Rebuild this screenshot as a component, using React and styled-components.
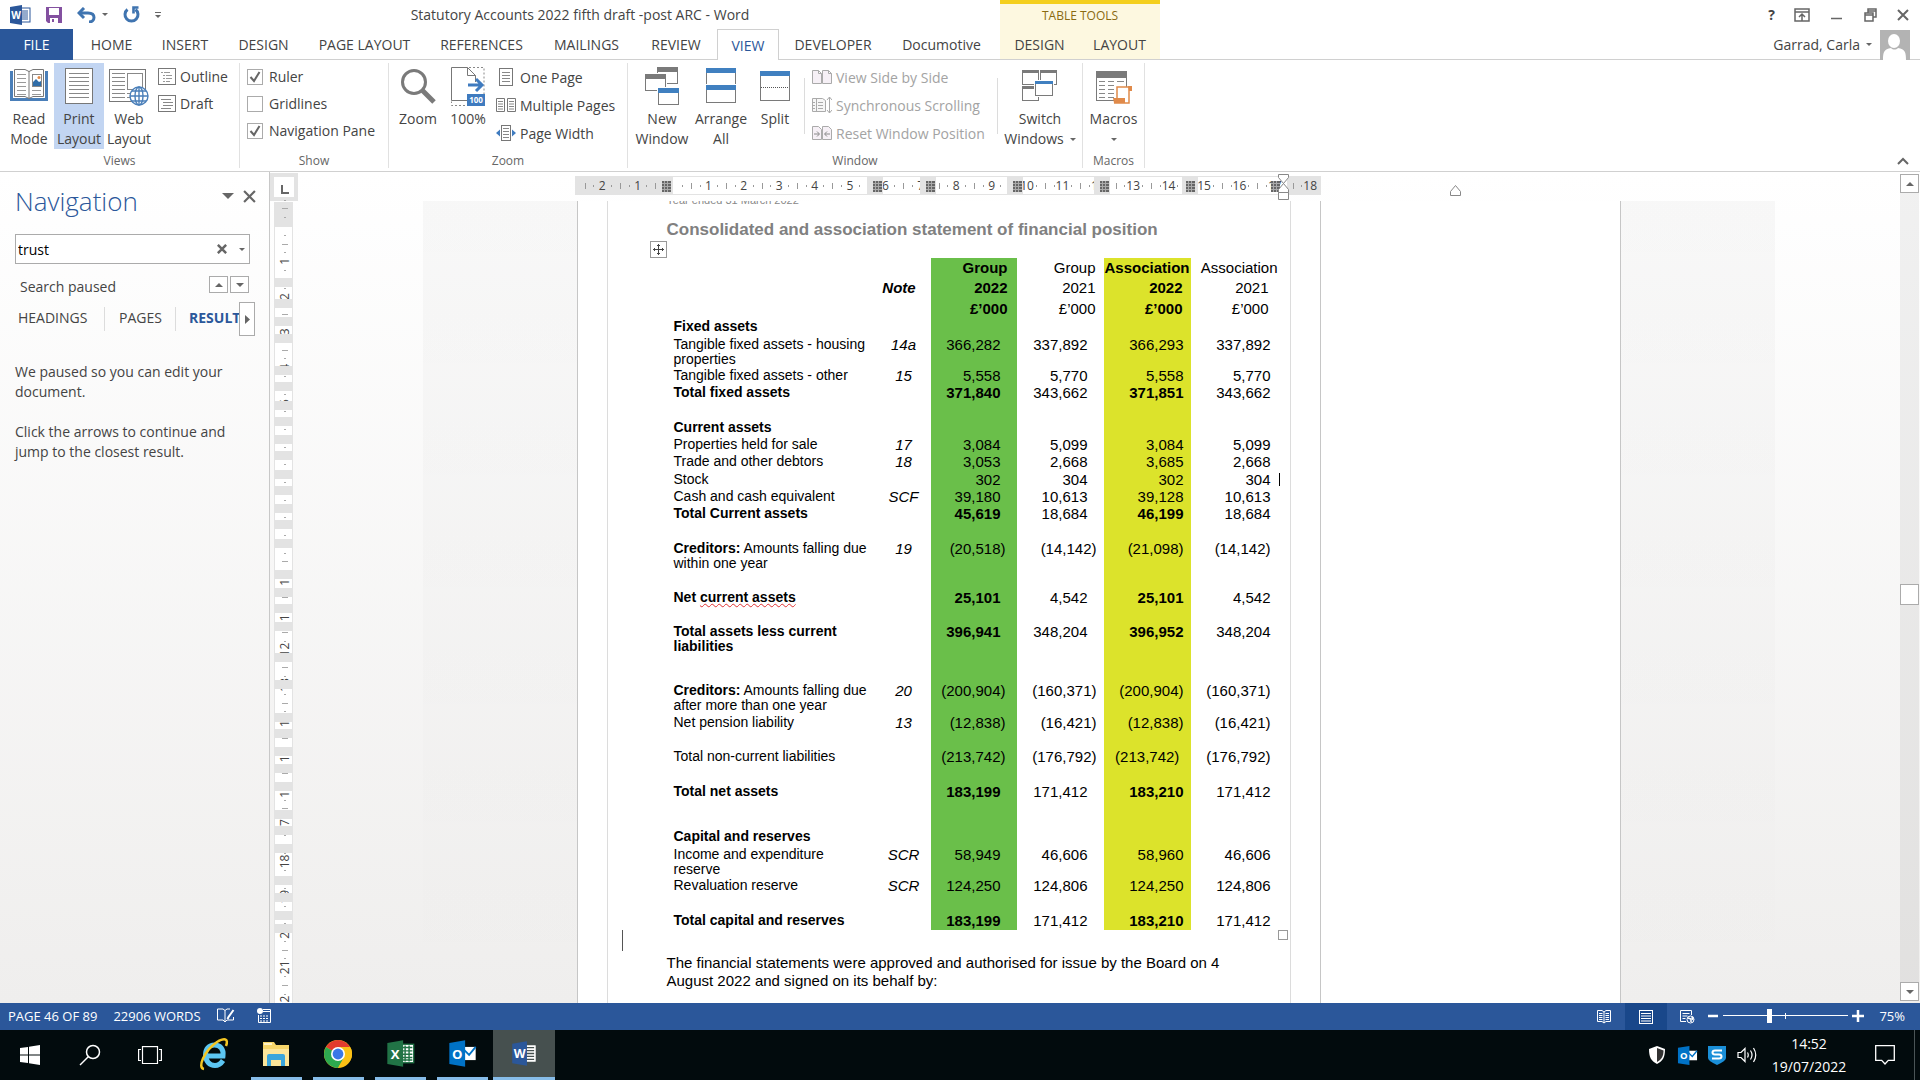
import React from "react";
import styled, { createGlobalStyle, css } from "styled-components";

const GlobalStyle = createGlobalStyle`
  * {
    box-sizing: border-box;
  }

  html, body, #root {
    height: 100%;
  }

  body {
    margin: 0;
    overflow: hidden;
    font-family: "Open Sans", "Noto Sans", sans-serif;
    font-size: 14px;
    color: #444;
  }

  button, input {
    font: inherit;
    color: inherit;
    border: none;
    background: none;
    padding: 0;
    margin: 0;
  }

  svg {
    display: block;
    flex: none;
  }
`;

const Window = styled.div`
  display: flex;
  flex-direction: column;
  height: 100vh;
  background: #fff;
`;

/* ---------- title bar and tabs ---------- */

const Header = styled.header`
  display: flex;
  height: 60px;
  flex: none;
  border-bottom: 1px solid #d0d0d0;
`;

const HeaderMain = styled.div`
  width: 1000px;
  flex: none;
`;

const TitleRow = styled.div`
  display: flex;
  align-items: center;
  height: 29px;
`;

const QuickAccess = styled.div`
  display: flex;
  align-items: center;
  gap: 15px;
  width: 160px;
  padding-left: 9px;
`;

const IconButton = styled.button`
  display: flex;
  align-items: center;
  justify-content: center;
  gap: 6px;
`;

const DocTitle = styled.div`
  flex: 1;
  text-align: center;
`;

const TabRow = styled.nav`
  display: flex;
  height: 31px;
`;

const Tab = styled.button`
  width: ${(props) => props.$width}px;
  height: 31px;
  white-space: nowrap;
  ${(props) =>
    props.$file &&
    css`
      background: #2a579a;
      color: #fff;
      margin-right: 3px;
    `}
  ${(props) =>
    props.$active &&
    css`
      background: #fff;
      color: #2b579a;
      border: 1px solid #d0d0d0;
      border-bottom: none;
    `}
`;

const ContextTabs = styled.div`
  width: 160px;
  flex: none;
  background: #fdf8e0;
  border-top: 4px solid #f4cf1d;
`;

const ContextLabel = styled.div`
  height: 25px;
  line-height: 24px;
  font-size: 12px;
  text-align: center;
  color: #8a6a10;
`;

const HeaderEnd = styled.div`
  flex: 1;
`;

const WindowControls = styled.div`
  display: flex;
  align-items: center;
  justify-content: flex-end;
  gap: 19px;
  height: 29px;
  padding-right: 11px;
`;

const Account = styled.div`
  display: flex;
  align-items: center;
  justify-content: flex-end;
  gap: 8px;
  height: 31px;
  padding-right: 10px;
`;

/* ---------- ribbon ---------- */

const Ribbon = styled.section`
  display: flex;
  position: relative;
  height: 112px;
  flex: none;
  border-bottom: 1px solid #d0d0d0;
`;

const Group = styled.div`
  display: flex;
  flex-direction: column;
  width: ${(props) => props.$width}px;
  margin: 3px 0;
  border-right: 1px solid #e1e1e1;
`;

const GroupBody = styled.div`
  display: flex;
  height: 86px;
  padding-left: ${(props) => props.$left || 0}px;
`;

const GroupLabel = styled.div`
  height: 18px;
  line-height: 24px;
  font-size: 12px;
  text-align: center;
  color: #666;
`;

const BigButton = styled.button`
  display: flex;
  flex-direction: column;
  align-items: center;
  width: ${(props) => props.$width || 50}px;
  height: 86px;
  padding-top: 4px;
  line-height: 20px;
  white-space: pre-line;
  background: ${(props) => (props.$active ? "#c2d5f2" : "none")};
`;

const IconSlot = styled.span`
  height: 42px;
`;

const ButtonLine = styled.span`
  display: flex;
  align-items: center;
  gap: 6px;
  height: 20px;
`;

const SmallColumn = styled.div`
  display: flex;
  flex-direction: column;
  min-width: ${(props) => props.$width || 0}px;
  padding: 0 ${(props) => props.$pad || 5}px;
`;

const SmallButton = styled.button`
  display: flex;
  align-items: center;
  gap: 4px;
  height: ${(props) => props.$height || 28}px;
  white-space: nowrap;

  &:disabled {
    color: #a3a3a3;
  }
`;

const CheckLabel = styled.label`
  display: flex;
  align-items: center;
  gap: 6px;
  height: 27px;
`;

const CheckBox = styled.span`
  display: grid;

  > * {
    grid-area: 1 / 1;
  }

  input {
    appearance: none;
    width: 16px;
    height: 16px;
    border: 1px solid #ababab;
    background: #fff;
  }

  svg {
    z-index: 1;
    pointer-events: none;
  }
`;

const Divider = styled.div`
  width: 1px;
  height: 56px;
  flex: none;
  margin: 15px 0 0 ${(props) => props.$left || 0}px;
  background: #dcdcdc;
`;

const CollapseButton = styled.button`
  position: absolute;
  right: 11px;
  bottom: 6px;
`;

/* ---------- navigation pane ---------- */

const Body = styled.div`
  display: flex;
  flex: 1;
  min-height: 0;
  background: linear-gradient(#fff, #efeeed);
`;

const NavPane = styled.aside`
  width: 270px;
  flex: none;
  padding: 0 13px 0 15px;
  border-right: 1px solid #c8c8c8;
`;

const NavHeader = styled.div`
  display: flex;
  align-items: center;
  gap: 9px;
  height: 48px;
  margin-bottom: 14px;
`;

const NavTitle = styled.h2`
  flex: 1;
  margin: 10px 0 0;
  font-size: 26px;
  font-weight: 300;
  color: #2b579a;
`;

const SearchBox = styled.div`
  display: flex;
  align-items: center;
  gap: 12px;
  width: 235px;
  height: 30px;
  padding: 0 4px 0 2px;
  border: 1px solid #ababab;
  background: #fff;

  input {
    flex: 1;
    min-width: 0;
    color: #000;
    outline: none;
  }
`;

const SearchStatus = styled.div`
  display: flex;
  align-items: center;
  gap: 2px;
  width: 234px;
  height: 38px;
  padding: 3px 0 0 5px;

  span {
    flex: 1;
    padding-top: 3px;
  }
`;

const BoxButton = styled.button`
  display: flex;
  align-items: center;
  justify-content: center;
  width: ${(props) => props.$width || 19}px;
  height: ${(props) => props.$height || 17}px;
  flex: none;
  border: 1px solid #ababab;
  background: #fff;
`;

const NavTabs = styled.div`
  display: flex;
  align-items: center;
  height: 34px;
  margin-bottom: 26px;
`;

const NavTab = styled.button`
  width: ${(props) => props.$width}px;
  height: 24px;
  flex: none;
  overflow: hidden;
  text-align: left;
  padding: 0 0 4px ${(props) => props.$left}px;
  font-weight: ${(props) => (props.$active ? 700 : 400)};
  color: ${(props) => (props.$active ? "#2b579a" : "inherit")};
  border-right: ${(props) => (props.$active ? "none" : "1px solid #dcdcdc")};
`;

const NavText = styled.p`
  margin: 0 0 20px;
  line-height: 20px;
`;

/* ---------- document ---------- */

const RulerColumn = styled.div`
  width: 28px;
  flex: none;
  overflow: hidden;
`;

const DocArea = styled.main`
  display: flex;
  flex-direction: column;
  align-items: center;
  flex: 1;
  min-width: 0;
`;

const Backdrop = styled.div`
  display: flex;
  justify-content: center;
  flex: 1;
  width: 1352px;
  min-height: 0;
  overflow: hidden;
  background: linear-gradient(rgba(0, 0, 0, 0.028), rgba(0, 0, 0, 0));
`;

const Sheet = styled.div`
  display: flex;
  width: 1044px;
  background: #fff;
  border: solid #c6c6c6;
  border-width: 0 1px;
`;

const Page = styled.article`
  width: 743px;
  padding: 0 29px;
  border-right: 1px solid #c6c6c6;
`;

const TextArea = styled.div`
  height: 100%;
  padding-left: 59px;
  border: solid #dcdcdc;
  border-width: 0 1px;
  font-family: "Liberation Sans", Arial, sans-serif;
  font-size: 15px;
  color: #000;
`;

const RunningHead = styled.div`
  display: flex;
  align-items: flex-end;
  height: 5px;
  overflow: hidden;
  font-size: 11px;
  line-height: 12px;
  color: #888;
`;

const DocHeading = styled.h1`
  margin: 14px 0 1px;
  font-size: 17px;
  line-height: 20px;
  color: #808080;
`;

const MoveHandle = styled.button`
  display: flex;
  align-items: center;
  justify-content: center;
  width: 17px;
  height: 17px;
  margin-left: -17px;
  border: 1px solid #999;
  background: #fff;
`;

const Statement = styled.table`
  width: 615px;
  table-layout: fixed;
  border-collapse: collapse;

  th, td {
    padding: 0;
    vertical-align: top;
    font-weight: 400;
  }
`;

const Row = styled.tr`
  height: ${(props) => props.$height}px;
`;

const LabelCell = styled.th`
  && {
    padding: 1px 0 0 7px;
    font-size: 14px;
    line-height: 15px;
    text-align: left;
    white-space: pre-line;
    font-weight: ${(props) => (props.$bold ? 700 : 400)};
  }
`;

const NoteCell = styled.td`
  && {
    padding-top: 1px;
    line-height: 16px;
    font-style: italic;
    text-align: center;
  }
`;

const NoteHead = styled.th`
  && {
    padding-right: 9px;
    line-height: 19px;
    font-weight: 700;
    font-style: italic;
    text-align: center;
  }
`;

const fills = { group: "#6abf4a", association: "#dce32b" };

const AmountCell = styled.td`
  && {
    position: relative;
    padding: 1px ${(props) => props.$right}px 0 0;
    line-height: 16px;
    text-align: right;
    white-space: pre;
    font-weight: ${(props) => (props.$bold ? 700 : 400)};
    background: ${(props) => fills[props.$fill] || "none"};
  }
`;

const AmountHead = styled(AmountCell).attrs({ as: "th" })`
  && {
    padding-top: 0;
    line-height: 19px;
  }
`;

const TextCaret = styled.i`
  position: absolute;
  right: 2px;
  top: 2px;
  width: 1px;
  height: 13px;
  background: #000;
`;

const Squiggle = styled.span`
  text-decoration: underline wavy #e03030 1px;
  text-underline-offset: 1px;
`;

const TableFoot = styled.div`
  display: flex;
  justify-content: space-between;
  align-items: flex-start;
  width: 666px;
  height: 24px;
  margin-left: -45px;
`;

const InsertionBar = styled.i`
  width: 1px;
  height: 21px;
  background: #555;
`;

const ResizeHandle = styled.i`
  width: 10px;
  height: 10px;
  border: 1px solid #999;
`;

const Paragraph = styled.p`
  width: 570px;
  margin: 0;
  line-height: 18px;
`;

const Scrollbar = styled.div`
  display: flex;
  flex-direction: column;
  align-items: flex-end;
  width: 21px;
  flex: none;
  padding: 2px 1px 2px 0;
`;

const ScrollTrack = styled.div`
  flex: 1;
  width: 19px;
  background: rgba(0, 0, 0, 0.055);
  padding-top: 391px;
`;

/* ---------- status bar ---------- */

const StatusBar = styled.footer`
  display: flex;
  align-items: center;
  height: 27px;
  flex: none;
  padding: 0 15px 2px 8px;
  background: #2b579a;
  color: #fff;
  font-size: 13px;
`;

const StatusItem = styled.button`
  display: flex;
  align-items: center;
  margin-right: ${(props) => props.$gap || 16}px;
`;

const Spacer = styled.div`
  flex: 1;
`;

const ViewButton = styled.button`
  display: flex;
  align-items: center;
  justify-content: center;
  align-self: flex-start;
  width: ${(props) => props.$width || 42}px;
  height: 27px;
  background: ${(props) => (props.$active ? "#19478a" : "none")};
`;

const ZoomSlider = styled.input`
  appearance: none;
  width: 125px;
  height: 16px;
  margin: 0 4px;
  background: linear-gradient(#fff, #fff) 50% 50% / 1px 6px no-repeat,
    linear-gradient(#fff, #fff) 0 50% / 100% 1px no-repeat;

  &::-webkit-slider-thumb {
    appearance: none;
    width: 5px;
    height: 14px;
    background: #fff;
  }
`;

const ZoomValue = styled.button`
  width: 41px;
  text-align: right;
`;

/* ---------- taskbar ---------- */

const Taskbar = styled.footer`
  display: flex;
  height: 50px;
  flex: none;
  background: #020b0d;
  color: #fff;
`;

const TaskButton = styled.button`
  display: flex;
  align-items: center;
  justify-content: center;
  width: 60px;
  height: 50px;
`;

const Apps = styled.div`
  display: flex;
  padding-left: 3px;
`;

const AppButton = styled.button`
  display: grid;
  grid-template-rows: 47px 3px;
  align-items: center;
  justify-items: center;
  width: 62px;
  height: 50px;
  background: ${(props) => (props.$active ? "#46504f" : "none")};

  &::after {
    content: "";
    width: ${(props) => (props.$active ? 62 : 51)}px;
    height: 3px;
    background: ${(props) => (props.$running ? "#86bce8" : "none")};
  }
`;

const TrayButton = styled.button`
  display: flex;
  align-items: center;
  justify-content: center;
  width: ${(props) => props.$width || 30}px;
`;

const Clock = styled.button`
  width: 94px;
  line-height: 23px;
  text-align: center;
`;

const ShowDesktop = styled.button`
  width: 6px;
  border-left: 1px solid #4a5456;
`;

/* ---------- icons ---------- */

const Arrow = ({ dir = "down", size = 6, color = "#666" }) => {
  const h = Math.ceil(size / 2);
  const shapes = {
    down: `0,0 ${size},0 ${size / 2},${h}`,
    up: `0,${h} ${size},${h} ${size / 2},0`,
    right: `0,0 ${h},${size / 2} 0,${size}`,
  };
  const side = dir === "right";
  return (
    <svg width={side ? h : size} height={side ? size : h}>
      <polygon points={shapes[dir]} fill={color} />
    </svg>
  );
};

const Cross = ({ size = 12, weight = 2, color = "#666" }) => (
  <svg width={size} height={size} viewBox="0 0 12 12">
    <path d="M1 1L11 11M11 1L1 11" stroke={color} strokeWidth={weight} />
  </svg>
);

const OfficeLogo = ({ letter, color, size = 22, kind = "doc" }) => (
  <svg width={size} height={size} viewBox="0 0 22 22">
    {kind === "doc" && (
      <g>
        <rect x="11" y="4" width="10" height="14" fill="#fff" stroke={color} />
        <path d="M12 7h7M12 9h7M12 11h7M12 13h7M12 15h7" stroke={color} />
      </g>
    )}
    {kind === "bars" && (
      <path d="M12 5h8M12 7.4h8M12 9.8h8M12 12.2h8M12 14.6h8M12 17h8M19.5 4.5v13" stroke="#fff" strokeWidth="1.3" />
    )}
    {kind === "grid" && (
      <g>
        <rect x="11" y="4" width="10" height="14" fill="#fff" stroke={color} />
        <path d="M12 6.5h8M12 9h8M12 11.5h8M12 14h8M12 16h8M14.5 5v12M17.5 5v12" stroke={color} strokeWidth="1.1" />
      </g>
    )}
    {kind === "mail" && (
      <g>
        <rect x="12" y="6" width="9" height="10" fill="#fff" />
        <path d="M12 8l4 4 5-6" fill="none" stroke={color} strokeWidth="1.4" />
      </g>
    )}
    <polygon points="1,3 13,1 13,21 1,19" fill={color} />
    <text x="7" y="15" textAnchor="middle" fontSize="10" fontWeight="700" fill="#fff">
      {letter}
    </text>
  </svg>
);

const SaveIcon = () => (
  <svg width="16" height="16" viewBox="0 0 16 16">
    <path d="M0 0h16v16H2l-2-2z" fill="#8350a0" />
    <path d="M3 1h10v7H3zM4 11h8v5H4z" fill="#fff" />
    <rect x="6" y="12" width="2" height="3" fill="#8350a0" />
  </svg>
);

const UndoIcon = () => (
  <svg width="19" height="16" viewBox="0 0 19 16" fill="none" stroke="#3f74b0">
    <path d="M2 6h9c4 0 6 2 6 4.5S15 15 12 15" strokeWidth="3" />
    <path d="M7 1L2 6l5 5" strokeWidth="3" />
  </svg>
);

const RedoIcon = () => (
  <svg width="17" height="17" viewBox="0 0 17 17" fill="none" stroke="#3f74b0">
    <path d="M4.5 3.500A6.500 6.500 0 1 0 12.5 3.500" strokeWidth="3" />
    <path d="M15.500 1.500h-5v6" strokeWidth="2.600" />
  </svg>
);

const lines = (x1, x2, from, count, step) =>
  Array.from({ length: count }, (_, i) => `M${x1} ${from + i * step}H${x2}`).join("");

const ReadIcon = () => (
  <svg width="38" height="37" viewBox="0 0 38 37" fill="none">
    <path d="M1.500 4v28.500h35V4" stroke="#4a7fb9" strokeWidth="3" />
    <path d="M4.500 2.500h10.500l4 2 4-2h10.500v27H23l-4 2-4-2H4.500z" fill="#fff" stroke="#777" />
    <path d="M19 4v28" stroke="#777" />
    <path d={lines(7, 16, 7.5, 6, 4) + lines(22, 31, 23.5, 2, 4)} stroke="#999" />
    <rect x="22.500" y="7.500" width="9" height="12" stroke="#888" fill="#fff" />
    <path d="M23 19v-4l3-3 3 3 2-1v5z" fill="#2f6da8" />
    <circle cx="29" cy="10.500" r="1.500" fill="#e08a4a" />
  </svg>
);

const PrintIcon = () => (
  <svg width="28" height="37" viewBox="0 0 28 37" fill="none">
    <rect x="0.500" y="1.500" width="27" height="35" fill="#fff" stroke="#777" />
    <path d={lines(4, 24, 6.5, 7, 4)} stroke="#888" />
  </svg>
);

const WebIcon = () => (
  <svg width="40" height="39" viewBox="0 0 40 39" fill="none">
    <rect x="0.500" y="2.500" width="36" height="32" fill="#fff" stroke="#777" />
    <path d={lines(3, 16, 6.5, 7, 4) + lines(18, 22, 26.5, 2, 4)} stroke="#888" />
    <rect x="18.500" y="6.500" width="15" height="16" stroke="#888" />
    <g stroke="#4a7fb9" strokeWidth="1.400">
      <circle cx="30" cy="29" r="9" fill="#fff" />
      <ellipse cx="30" cy="29" rx="4" ry="9" />
      <path d="M21 29h18M23 24h14M23 34h14M30 20v18" />
    </g>
  </svg>
);

const OutlineIcon = () => (
  <svg width="18" height="17" viewBox="0 0 18 17" fill="none" stroke="#777">
    <rect x="0.500" y="0.500" width="17" height="16" fill="#fff" />
    <path d="M3 4.500h2M6 4.500h6M5 7.500h2M8 7.500h6M5 10.500h2M8 10.500h6M5 13.500h2M8 13.500h4" stroke="#999" />
  </svg>
);

const DraftIcon = () => (
  <svg width="18" height="17" viewBox="0 0 18 17" fill="none" stroke="#777">
    <rect x="0.500" y="0.500" width="17" height="16" fill="#fff" />
    <path d="M3 4.500h10M5 7.500h10M5 10.500h10M3 13.500h10" stroke="#888" />
  </svg>
);

const CheckIcon = () => (
  <svg width="16" height="16" viewBox="0 0 16 16">
    <path d="M3.500 8l3.500 4 5.500-9" fill="none" stroke="#666" strokeWidth="2" />
  </svg>
);

const ZoomIcon = () => (
  <svg width="36" height="38" viewBox="0 0 36 38" fill="none" stroke="#7a7a7a">
    <circle cx="14" cy="15" r="11.500" strokeWidth="3" />
    <path d="M22 23l12 12" strokeWidth="5" />
  </svg>
);

const HundredIcon = () => (
  <svg width="34" height="40" viewBox="0 0 34 40" fill="none">
    <path d="M18 .5h15v38H.5v-4" stroke="#888" strokeDasharray="2 2" />
    <path d="M.5 33.500V.5h16l8 8v25z" fill="#fff" />
    <path d="M24.500 15V8.500l-8-8H.5v33H16M16.500 .5v8h8" stroke="#777" />
    <path d="M17 18h13M25 12l6 6-6 6" stroke="#3f7bbf" strokeWidth="3" />
    <rect x="16" y="27" width="18" height="12" fill="#3f7bbf" />
    <text x="25" y="36" textAnchor="middle" fontSize="8" fontWeight="700" fill="#fff">
      100
    </text>
  </svg>
);

const OnePageIcon = () => (
  <svg width="20" height="18" viewBox="0 0 20 18" fill="none" stroke="#777">
    <rect x="3.500" y="0.500" width="13" height="17" fill="#fff" />
    <path d={lines(6, 14, 4.5, 4, 3)} stroke="#888" />
  </svg>
);

const MultiPageIcon = () => (
  <svg width="20" height="16" viewBox="0 0 20 16" fill="none" stroke="#777">
    <path d="M.5 1.500h8v13h-8zM11.500 1.500h8v13h-8z" fill="#fff" />
    <path d={lines(2, 7, 4.5, 4, 2.5) + lines(13, 18, 4.5, 4, 2.5)} stroke="#888" />
  </svg>
);

const PageWidthIcon = () => (
  <svg width="20" height="16" viewBox="0 0 20 16" fill="none" stroke="#777">
    <rect x="5.500" y="0.500" width="9" height="15" fill="#fff" />
    <path d={lines(7, 13, 3.5, 4, 3)} stroke="#888" />
    <path d="M4 4.500v7L0 8zM16 4.500v7L20 8z" fill="#3f7bbf" stroke="none" />
  </svg>
);

const Pane = ({ x, y, w, h, bar = "#7a7a7a", cap = 5 }) => (
  <g>
    <rect x={x - 1} y={y - 1} width={w + 2} height={h + 2} fill="#fff" />
    <rect x={x + 0.5} y={y + 0.5} width={w - 1} height={h - 1} fill="#fff" stroke="#7a7a7a" />
    <rect x={x} y={y} width={w} height={cap} fill={bar} />
  </g>
);

const NewWindowIcon = () => (
  <svg width="34" height="38" viewBox="0 0 34 38">
    <Pane x={12} y={0} w={21} h={17} />
    <Pane x={0} y={7} w={21} h={17} />
    <Pane x={13} y={21} w={21} h={17} bar="#4080c0" />
  </svg>
);

const ArrangeIcon = () => (
  <svg width="30" height="36" viewBox="0 0 30 36">
    <Pane x={0} y={1} w={30} h={18} bar="#4080c0" />
    <Pane x={0} y={18} w={30} h={18} bar="#4080c0" />
  </svg>
);

const SplitIcon = () => (
  <svg width="30" height="34" viewBox="0 0 30 34">
    <Pane x={0} y={4} w={30} h={30} bar="#4080c0" />
    <path d="M1 20.500h28" stroke="#555" strokeDasharray="1 1" />
  </svg>
);

const SideIcon = () => (
  <svg width="20" height="16" viewBox="0 0 20 16" fill="#f6f0f6" stroke="#aaa">
    <path d="M.5 1.500h6l3 3v10h-9zM10.500 1.500h6l3 3v10h-9zM6.500 1.500v3h3M16.500 1.500v3h3" />
  </svg>
);

const SyncIcon = () => (
  <svg width="20" height="18" viewBox="0 0 20 18" fill="none" stroke="#aaa">
    <path d="M.5 2.500h10l3 2v11H.5zM4.500 2.500v13" fill="#f6f6f6" />
    <path d={lines(6, 11, 6.5, 3, 3) + lines(1, 3, 6.5, 3, 3)} />
    <path d="M17.500 1v16M15 4l2.500-3L20 4M15 14l2.500 3 2.500-3" />
  </svg>
);

const ResetIcon = () => (
  <svg width="20" height="16" viewBox="0 0 20 16" fill="#f6f0f6" stroke="#aaa">
    <path d="M.5 1.500h6l3 3v10h-9zM10.500 1.500h6l3 3v10h-9z" />
    <path d="M2 9h5M5 6.500L7.500 9 5 11.500M18 9h-5M15 6.500L12.500 9l2.500 2.500" fill="none" stroke="#888" />
  </svg>
);

const SwitchIcon = () => (
  <svg width="36" height="34" viewBox="0 0 36 34">
    <Pane x={0} y={3} w={17} h={15} cap={3} />
    <Pane x={18} y={3} w={17} h={15} cap={3} />
    <Pane x={0} y={19} w={17} h={15} cap={3} />
    <Pane x={13} y={14} w={18} h={15} cap={3} bar="#4080c0" />
  </svg>
);

const MacrosIcon = () => (
  <svg width="36" height="37" viewBox="0 0 36 37" fill="none">
    <rect x="0.500" y="4.500" width="30" height="29" fill="#fff" stroke="#7a7a7a" />
    <rect y="4" width="31" height="7" fill="#7a7a7a" />
    <path d={lines(3, 9, 14.5, 5, 4) + lines(12, 18, 14.5, 5, 4) + lines(21, 28, 14.5, 1, 4)} stroke="#888" />
    <path d="M21 32V20h12v16H18" fill="#fff" stroke="#e08a4a" strokeWidth="1.500" />
    <path d="M17 31h12v5H18zM32 19h4v5h-3z" fill="#e08a4a" />
  </svg>
);

const WindowGlyph = ({ d, size = 16 }) => (
  <svg width={size} height="14" viewBox={`0 0 ${size} 14`}>
    <path d={d} fill="none" stroke="#666" strokeWidth="1.500" />
  </svg>
);

const Avatar = () => (
  <svg width="30" height="30" viewBox="0 0 30 30">
    <rect width="30" height="30" fill="#b3b3b3" />
    <ellipse cx="14" cy="11" rx="6" ry="7" fill="#fff" />
    <path d="M3 30c0-8 1-11 8-12 2 2 5 2 7 0 7 1 8 4 8 12z" fill="#fff" />
  </svg>
);

const StatusBook = () => (
  <svg width="18" height="15" viewBox="0 0 18 15" fill="none" stroke="#fff">
    <path d="M8 2.500L6 1H.5v11H6l2 2 2-2h6.500V9M8 2.500V14M8 2.500L10 1h3" />
    <path d="M16.500 2l-5 7-1 2" strokeWidth="2" />
  </svg>
);

const MacroRecord = () => (
  <svg width="14" height="15" viewBox="0 0 14 15" fill="none" stroke="#fff">
    <path d="M1.500 7v7.500h12v-13H6M6 3.500h7" />
    <path d="M3 8h9M3 10.500h9M3 13h9" strokeDasharray="2 1" />
    <circle cx="3" cy="3" r="3" fill="#fff" stroke="none" />
  </svg>
);

const StatusRead = () => (
  <svg width="14" height="14" viewBox="0 0 14 14" fill="none" stroke="#fff">
    <path d="M7 2L5 .5H.5v11H5L7 13l2-1.500h4.500V.5H9L7 2v11" />
    <path d={lines(2, 5.5, 3.5, 4, 2) + lines(8.5, 12, 3.5, 4, 2)} />
  </svg>
);

const StatusPrint = () => (
  <svg width="14" height="14" viewBox="0 0 14 14" fill="none" stroke="#fff">
    <rect x="0.500" y="0.500" width="13" height="13" />
    <path d={lines(2, 12, 3.5, 4, 2.5)} />
  </svg>
);

const StatusWeb = () => (
  <svg width="15" height="14" viewBox="0 0 15 14" fill="none" stroke="#fff">
    <path d="M6 11.500H.5V.5h11V5" />
    <path d="M2.500 3.500h7M2.500 6h5M2.500 8.500h3" />
    <circle cx="10.500" cy="9.500" r="3.500" />
    <path d="M8 8l3 1v3M12 7l1 3" strokeWidth="1.500" />
  </svg>
);

const Sign = ({ plus }) => (
  <svg width="12" height="12" viewBox="0 0 12 12">
    <path d={plus ? "M0 6h12M6 0v12" : "M1 6h10"} stroke="#fff" strokeWidth="2.500" />
  </svg>
);

const StartIcon = () => (
  <svg width="20" height="20" viewBox="0 0 20 20" fill="#fff">
    <path d="M0 3l8-1v7.500H0zM9 1.800L20 0v9.500H9zM0 10.500h8V18l-8-1zM9 10.500h11V20L9 18.200z" />
  </svg>
);

const SearchIcon = () => (
  <svg width="22" height="22" viewBox="0 0 22 22" fill="none" stroke="#fff" strokeWidth="1.500">
    <circle cx="14" cy="8" r="6.500" />
    <path d="M9.500 12.500L1 21" />
  </svg>
);

const TaskViewIcon = () => (
  <svg width="24" height="18" viewBox="0 0 24 18" fill="none" stroke="#fff" strokeWidth="1.200">
    <rect x="4.500" y="0.600" width="15" height="17" />
    <path d="M3 3.500H.6v11H3M21 3.500h2.400v11H21" />
  </svg>
);

const ExplorerLogo = () => (
  <svg width="30" height="34" viewBox="0 0 30 34" fill="none">
    <path d="M6 19h18c1-7-3-11-8.500-11S6.500 12 6.500 18s4 10.500 9.500 10.500c4 0 6-2 8-5" stroke="#5cc6f2" strokeWidth="5" />
    <path d="M5 32C-2 31 5 14 18 5c7-4 12-4 9 4" stroke="#f3c623" strokeWidth="2.500" />
  </svg>
);

const FolderLogo = () => (
  <svg width="28" height="26" viewBox="0 0 28 26">
    <path d="M1 1h11l2 3h13v20H1z" fill="#f5d56a" />
    <path d="M1 8h26v17H1z" fill="#fbe59a" />
    <path d="M5 25V15q0-2 2-2h14q2 0 2 2v10h-4v-6h-10v6z" fill="#3aa5dc" />
    <rect x="2" y="2" width="8" height="2" fill="#fff3c4" />
  </svg>
);

const ChromeLogo = () => (
  <svg width="28" height="28" viewBox="0 0 28 28">
    <circle cx="14" cy="14" r="14" fill="#fbc116" />
    <path d="M14 14L1.900 7A14 14 0 0 1 26.100 7z" fill="#e33b2e" />
    <path d="M14 14L1.900 7A14 14 0 0 0 14 28l6-10.500z" fill="#2da94f" />
    <path d="M14 7h12.100a14 14 0 0 1 0 14L14 28l6-10.500z" fill="#fbc116" />
    <circle cx="14" cy="14" r="7" fill="#fff" />
    <circle cx="14" cy="14" r="5.400" fill="#3b78e7" />
  </svg>
);

const ShieldIcon = () => (
  <svg width="18" height="18" viewBox="0 0 18 18">
    <path d="M9 0l8 3c0 8-2 12-8 15C3 15 1 11 1 3z" fill="#fff" />
    <path d="M9 2l6.500 2.500c0 6-2 9-6.500 11.500z" fill="#333" />
  </svg>
);

const SophosIcon = () => (
  <svg width="18" height="19" viewBox="0 0 18 19">
    <path d="M0 0h18v12q0 3-9 7Q0 15 0 12z" fill="#1a8fd8" />
    <path d="M14 4.500H7q-2.500 0-2.500 2T7 8.500h4q2.500 0 2.500 2t-2.500 2H4" fill="none" stroke="#fff" strokeWidth="2" />
  </svg>
);

const VolumeIcon = () => (
  <svg width="20" height="18" viewBox="0 0 20 18" fill="none" stroke="#fff" strokeWidth="1.200">
    <path d="M1 6.500h3l4-4v13l-4-4H1z" />
    <path d="M10.500 6.500q1.500 2.500 0 5M13.500 4.500q3 4.500 0 9M16.500 2q4.500 7 0 14" />
  </svg>
);

const NoticeIcon = () => (
  <svg width="20" height="20" viewBox="0 0 20 20" fill="none" stroke="#fff" strokeWidth="1.300">
    <path d="M.7 .7h18.600v14.600h-6L10 19l-3.300-3.700h-6z" />
  </svg>
);

/* ---------- rulers ---------- */

const CM = 35.4;

// x is measured from the left edge of the ruler
const columnMarks = [87, 298, 351, 438, 525, 611, 696];
const columnBands = [292, 345, 432, 519, 607];

const HorizontalRuler = () => {
  const origin = 98;
  const numbers = Array.from({ length: 21 }, (_, i) => i - 2).filter((n) => n && n < 19);
  const ticks = Array.from({ length: 83 }, (_, i) => i - 10).filter((q) => q % 4 && q < 72);
  return (
    <svg width="1048" height="29" viewBox="0 0 1048 29">
      <rect x="0" y="4" width="746" height="19" fill="#e3e3e3" />
      <rect x="98" y="4" width="614" height="19" fill="#fff" />
      <path d="M98 4.500h614M98 22.500h614" stroke="#e3e3e3" />
      {ticks.map((q) => (
        <path
          key={q}
          d={`M${Math.round(origin + (q * CM) / 4) + 0.5} ${q % 2 ? "13v2" : "11v6"}`}
          stroke="#999"
        />
      ))}
      {numbers.map((n) => (
        <text key={n} x={origin + n * CM} y="18" textAnchor="middle" fontSize="12" fill="#444">
          {Math.abs(n)}
        </text>
      ))}
      {columnBands.map((x) => (
        <rect key={x} x={x} y="4" width="16" height="19" fill="#e3e3e3" />
      ))}
      {columnMarks.map((x) => (
        <g key={x}>
          <rect x={x} y="9" width="9" height="11" fill="#666" />
          <path d={`M${x} 11.500h9M${x} 14.500h9M${x} 17.500h9M${x + 2.5} 9v11M${x + 5.5} 9v11`} stroke="#aaa" />
        </g>
      ))}
      <path
        d="M703.500 2.500h10v3l-5 6-5-6zM703.500 20.500v-3l5-6 5 6v3zM703.500 20.500h10v7h-10z"
        fill="#fff"
        stroke="#888"
      />
      <path d="M875.500 23.500v-4l5-6 5 6v4z" fill="#fff" stroke="#888" />
    </svg>
  );
};

const rowBands = [
  106, 127, 145, 162, 194, 210, 229, 245, 263, 279, 298, 314, 332, 348, 367, 398, 416, 432, 450, 481,
  508, 541, 557, 575, 592, 610, 638, 654, 672, 704, 721, 739, 752,
];

const VerticalRuler = () => {
  const origin = 54;
  const step = 35.3;
  const numbers = Array.from({ length: 22 }, (_, i) => i + 1);
  const ticks = Array.from({ length: 93 }, (_, i) => i - 3).filter((q) => q % 4);
  return (
    <svg width="28" height="831" viewBox="0 0 28 831">
      <rect x="0" y="1" width="28" height="28" fill="#e3e3e3" />
      <rect x="4" y="5" width="20" height="20" fill="#fff" />
      <path d="M12 13v8h7" fill="none" stroke="#666" strokeWidth="2" />
      <rect x="4" y="30" width="19" height="801" fill="#e3e3e3" />
      <rect x="5" y="55" width="17" height="776" fill="#fff" />
      {ticks.map((q) => (
        <path
          key={q}
          d={`M${q % 2 ? "14" : "12"} ${Math.round(origin + (q * step) / 4) + 0.5}h${q % 2 ? 2 : 6}`}
          stroke="#aaa"
        />
      ))}
      {numbers.map((n) => (
        <text
          key={n}
          transform={`translate(19 ${origin + n * step}) rotate(-90)`}
          textAnchor="middle"
          fontSize="12"
          fill="#444"
        >
          {n}
        </text>
      ))}
      {rowBands.map((y) => (
        <rect key={y} x="4" y={y} width="19" height="9" fill="#e3e3e3" />
      ))}
    </svg>
  );
};

/* ---------- data ---------- */

const tabs = [
  { name: "FILE", width: 73, file: true },
  { name: "HOME", width: 71 },
  { name: "INSERT", width: 76 },
  { name: "DESIGN", width: 81 },
  { name: "PAGE LAYOUT", width: 121 },
  { name: "REFERENCES", width: 113 },
  { name: "MAILINGS", width: 97 },
  { name: "REVIEW", width: 82 },
  { name: "VIEW", width: 62, active: true },
  { name: "DEVELOPER", width: 108 },
  { name: "Documotive", width: 109 },
];

const columns = [
  { fill: "group", bold: true, right: 16, paren: 11, head: 9, name: "Group", nameRight: 9, year: "2022" },
  { right: 16, paren: 7, head: 8, name: "Group", nameRight: 8, year: "2021" },
  { fill: "association", bold: true, right: 7, paren: 7, head: 8, name: "Association", nameRight: 1, year: "2022" },
  { right: 11, paren: 11, head: 13, name: "Association", nameRight: 4, year: "2021" },
];

const rows = [
  { label: "Fixed assets", bold: true, height: 18 },
  { label: "Tangible fixed assets - housing\nproperties", note: "14a", values: ["366,282", "337,892", "366,293", "337,892"], height: 31 },
  { label: "Tangible fixed assets - other", note: "15", values: ["5,558", "5,770", "5,558", "5,770"], height: 17 },
  { label: "Total fixed assets", bold: true, values: ["371,840", "343,662", "371,851", "343,662"], height: 35 },
  { label: "Current assets", bold: true, height: 17 },
  { label: "Properties held for sale", note: "17", values: ["3,084", "5,099", "3,084", "5,099"], height: 17 },
  { label: "Trade and other debtors", note: "18", values: ["3,053", "2,668", "3,685", "2,668"], height: 18 },
  { label: "Stock", values: ["302", "304", "302", "304"], caret: true, height: 17 },
  { label: "Cash and cash equivalent", note: "SCF", values: ["39,180", "10,613", "39,128", "10,613"], height: 17 },
  { label: "Total Current assets", bold: true, values: ["45,619", "18,684", "46,199", "18,684"], height: 35 },
  { lead: "Creditors:", label: " Amounts falling due\nwithin one year", note: "19", values: ["(20,518)", "(14,142)", "(21,098)", "(14,142)"], height: 49 },
  { lead: "Net ", misspelt: "current assets", bold: true, values: ["25,101", "4,542", "25,101", "4,542"], height: 34 },
  { label: "Total assets less current\nliabilities", bold: true, values: ["396,941", "348,204", "396,952", "348,204"], height: 59 },
  { lead: "Creditors:", label: " Amounts falling due\nafter more than one year", note: "20", values: ["(200,904)", "(160,371)", "(200,904)", "(160,371)"], height: 32 },
  { label: "Net pension liability", note: "13", values: ["(12,838)", "(16,421)", "(12,838)", "(16,421)"], height: 34 },
  { label: "Total non-current liabilities", values: ["(213,742)", "(176,792)", "(213,742) ", "(176,792)"], height: 35 },
  { label: "Total net assets", bold: true, values: ["183,199", "171,412", "183,210", "171,412"], height: 45 },
  { label: "Capital and reserves", bold: true, height: 18 },
  { label: "Income and expenditure\nreserve", note: "SCR", values: ["58,949", "46,606", "58,960", "46,606"], height: 31 },
  { label: "Revaluation reserve", note: "SCR", values: ["124,250", "124,806", "124,250", "124,806"], height: 35 },
  { label: "Total capital and reserves", bold: true, values: ["183,199", "171,412", "183,210", "171,412"], height: 18 },
];

/* ---------- sections ---------- */

const TopBar = () => (
  <Header>
    <HeaderMain>
      <TitleRow>
        <QuickAccess>
          <OfficeLogo letter="W" color="#2b579a" />
          <IconButton aria-label="Save">
            <SaveIcon />
          </IconButton>
          <IconButton aria-label="Undo">
            <UndoIcon />
            <Arrow />
          </IconButton>
          <IconButton aria-label="Repeat">
            <RedoIcon />
          </IconButton>
          <IconButton aria-label="Customize toolbar">
            <svg width="6" height="6">
              <path d="M0 .5h6" stroke="#666" />
              <path d="M0 3h6l-3 3z" fill="#666" />
            </svg>
          </IconButton>
        </QuickAccess>
        <DocTitle>Statutory Accounts 2022 fifth draft -post ARC - Word</DocTitle>
      </TitleRow>
      <TabRow>
        {tabs.map((tab) => (
          <Tab key={tab.name} $width={tab.width} $file={tab.file} $active={tab.active}>
            {tab.name}
          </Tab>
        ))}
      </TabRow>
    </HeaderMain>
    <ContextTabs>
      <ContextLabel>TABLE TOOLS</ContextLabel>
      <TabRow>
        <Tab $width={79}>DESIGN</Tab>
        <Tab $width={81}>LAYOUT</Tab>
      </TabRow>
    </ContextTabs>
    <HeaderEnd>
      <WindowControls>
        <IconButton aria-label="Help">
          <b>?</b>
        </IconButton>
        <IconButton aria-label="Ribbon display options">
          <WindowGlyph d="M1 1h14v12H1zM1 4h14M8 13V6M5 9l3-3 3 3" />
        </IconButton>
        <IconButton aria-label="Minimize">
          <WindowGlyph d="M2 10.500h11" />
        </IconButton>
        <IconButton aria-label="Restore">
          <WindowGlyph d="M1 5h8v8H1zM1 7h8M4 5V1h8v8H9M4 3h8" size={14} />
        </IconButton>
        <IconButton aria-label="Close">
          <Cross />
        </IconButton>
      </WindowControls>
      <Account>
        <IconButton>
          Garrad, Carla <Arrow />
        </IconButton>
        <Avatar />
      </Account>
    </HeaderEnd>
  </Header>
);

const CheckItem = ({ name, checked }) => (
  <CheckLabel>
    <CheckBox>
      <input type="checkbox" defaultChecked={checked} />
      {checked && <CheckIcon />}
    </CheckBox>
    {name}
  </CheckLabel>
);

const BigCommand = ({ icon, text, children, ...rest }) => (
  <BigButton {...rest}>
    <IconSlot>{icon}</IconSlot>
    {text}
    {children}
  </BigButton>
);

const RibbonBar = () => (
  <Ribbon>
    <Group $width={240}>
      <GroupBody $left={4}>
        <BigCommand icon={<ReadIcon />} text={"Read\nMode"} />
        <BigCommand icon={<PrintIcon />} text={"Print\nLayout"} $active />
        <BigCommand icon={<WebIcon />} text={"Web\nLayout"} />
        <SmallColumn $pad={4}>
          <SmallButton $height={27}>
            <OutlineIcon />
            Outline
          </SmallButton>
          <SmallButton $height={27}>
            <DraftIcon />
            Draft
          </SmallButton>
        </SmallColumn>
      </GroupBody>
      <GroupLabel>Views</GroupLabel>
    </Group>
    <Group $width={149}>
      <GroupBody $left={2}>
        <SmallColumn>
          <CheckItem name="Ruler" checked />
          <CheckItem name="Gridlines" />
          <CheckItem name="Navigation Pane" checked />
        </SmallColumn>
      </GroupBody>
      <GroupLabel>Show</GroupLabel>
    </Group>
    <Group $width={239}>
      <GroupBody $left={4}>
        <BigCommand icon={<ZoomIcon />} text="Zoom" />
        <BigCommand icon={<HundredIcon />} text="100%" />
        <SmallColumn $pad={3}>
          <SmallButton>
            <OnePageIcon />
            One Page
          </SmallButton>
          <SmallButton>
            <MultiPageIcon />
            Multiple Pages
          </SmallButton>
          <SmallButton>
            <PageWidthIcon />
            Page Width
          </SmallButton>
        </SmallColumn>
      </GroupBody>
      <GroupLabel>Zoom</GroupLabel>
    </Group>
    <Group $width={455}>
      <GroupBody $left={4}>
        <BigCommand icon={<NewWindowIcon />} text={"New\nWindow"} $width={60} />
        <BigCommand icon={<ArrangeIcon />} text={"Arrange\nAll"} $width={58} />
        <BigCommand icon={<SplitIcon />} text="Split" />
        <Divider $left={4} />
        <SmallColumn $pad={7} $width={192}>
          <SmallButton disabled>
            <SideIcon />
            View Side by Side
          </SmallButton>
          <SmallButton disabled>
            <SyncIcon />
            Synchronous Scrolling
          </SmallButton>
          <SmallButton disabled>
            <ResetIcon />
            Reset Window Position
          </SmallButton>
        </SmallColumn>
        <Divider />
        <BigCommand icon={<SwitchIcon />} text="Switch" $width={84}>
          <ButtonLine>
            Windows <Arrow />
          </ButtonLine>
        </BigCommand>
      </GroupBody>
      <GroupLabel>Window</GroupLabel>
    </Group>
    <Group $width={62}>
      <GroupBody>
        <BigCommand icon={<MacrosIcon />} text="Macros" $width={61}>
          <ButtonLine>
            <Arrow />
          </ButtonLine>
        </BigCommand>
      </GroupBody>
      <GroupLabel>Macros</GroupLabel>
    </Group>
    <CollapseButton aria-label="Collapse the ribbon">
      <svg width="12" height="8" viewBox="0 0 12 8">
        <path d="M1 7l5-5 5 5" fill="none" stroke="#666" strokeWidth="2" />
      </svg>
    </CollapseButton>
  </Ribbon>
);

const Navigation = () => (
  <NavPane>
    <NavHeader>
      <NavTitle>Navigation</NavTitle>
      <IconButton aria-label="Pane options">
        <Arrow size={12} />
      </IconButton>
      <IconButton aria-label="Close pane">
        <Cross size={13} />
      </IconButton>
    </NavHeader>
    <SearchBox>
      <input type="text" aria-label="Search document" defaultValue="trust" />
      <IconButton aria-label="Clear search">
        <Cross size={10} weight={3} />
      </IconButton>
      <IconButton aria-label="Search options">
        <Arrow />
      </IconButton>
    </SearchBox>
    <SearchStatus>
      <span>Search paused</span>
      <BoxButton aria-label="Previous result">
        <Arrow dir="up" size={8} />
      </BoxButton>
      <BoxButton aria-label="Next result">
        <Arrow size={8} />
      </BoxButton>
    </SearchStatus>
    <NavTabs>
      <NavTab $width={90} $left={3}>
        HEADINGS
      </NavTab>
      <NavTab $width={71} $left={14}>
        PAGES
      </NavTab>
      <NavTab $width={63} $left={13} $active>
        RESULTS
      </NavTab>
      <BoxButton $width={16} $height={34} aria-label="More tabs">
        <Arrow dir="right" size={9} />
      </BoxButton>
    </NavTabs>
    <NavText>We paused so you can edit your document.</NavText>
    <NavText>Click the arrows to continue and jump to the closest result.</NavText>
  </NavPane>
);

const StatementRow = ({ row }) => (
  <Row $height={row.height}>
    <LabelCell scope="row" $bold={row.bold}>
      {row.lead && <b>{row.lead}</b>}
      {row.label}
      {row.misspelt && <Squiggle>{row.misspelt}</Squiggle>}
    </LabelCell>
    <NoteCell>{row.note}</NoteCell>
    {columns.map((col, i) => {
      const value = row.values ? row.values[i] : "";
      return (
        <AmountCell
          key={i}
          $fill={col.fill}
          $bold={row.bold && col.bold}
          $right={value.startsWith("(") ? col.paren : col.right}
        >
          {value}
          {row.caret && i === 3 && <TextCaret />}
        </AmountCell>
      );
    })}
  </Row>
);

const StatementTable = () => (
  <Statement>
    <colgroup>
      <col width="210" />
      <col width="54" />
      <col width="86" />
      <col width="87" />
      <col width="87" />
      <col width="91" />
    </colgroup>
    <thead>
      <Row $height={20}>
        <td />
        <td />
        {columns.map((col, i) => (
          <AmountHead key={i} $fill={col.fill} $bold={col.bold} $right={col.nameRight}>
            {col.name}
          </AmountHead>
        ))}
      </Row>
      <Row $height={21}>
        <td />
        <NoteHead>Note</NoteHead>
        {columns.map((col, i) => (
          <AmountHead key={i} $fill={col.fill} $bold={col.bold} $right={col.head}>
            {col.year}
          </AmountHead>
        ))}
      </Row>
      <Row $height={18}>
        <td />
        <td />
        {columns.map((col, i) => (
          <AmountHead key={i} $fill={col.fill} $bold={col.bold} $right={col.head}>
            £’000
          </AmountHead>
        ))}
      </Row>
    </thead>
    <tbody>
      {rows.map((row, i) => (
        <StatementRow key={i} row={row} />
      ))}
    </tbody>
  </Statement>
);

const Document = () => (
  <DocArea>
    <HorizontalRuler />
    <Backdrop>
      <Sheet>
        <Page>
          <TextArea>
            <RunningHead>Year ended 31 March 2022</RunningHead>
            <DocHeading>Consolidated and association statement of financial position</DocHeading>
            <MoveHandle aria-label="Move table">
              <svg width="11" height="11" viewBox="0 0 11 11" fill="none" stroke="#444">
                <path d="M5.500 0v11M0 5.500h11M4 2l1.500-1.500L7 2M4 9l1.500 1.500L7 9M2 4L.5 5.500 2 7M9 4l1.500 1.500L9 7" />
              </svg>
            </MoveHandle>
            <StatementTable />
            <TableFoot>
              <InsertionBar />
              <ResizeHandle />
            </TableFoot>
            <Paragraph>
              The financial statements were approved and authorised for issue by the Board on 4 August 2022 and
              signed on its behalf by:
            </Paragraph>
          </TextArea>
        </Page>
      </Sheet>
    </Backdrop>
  </DocArea>
);

const Status = () => (
  <StatusBar>
    <StatusItem>PAGE 46 OF 89</StatusItem>
    <StatusItem>22906 WORDS</StatusItem>
    <StatusItem $gap={22} aria-label="Proofing">
      <StatusBook />
    </StatusItem>
    <StatusItem aria-label="Record macro">
      <MacroRecord />
    </StatusItem>
    <Spacer />
    <ViewButton aria-label="Read mode">
      <StatusRead />
    </ViewButton>
    <ViewButton $active aria-label="Print layout">
      <StatusPrint />
    </ViewButton>
    <ViewButton $width={40} aria-label="Web layout">
      <StatusWeb />
    </ViewButton>
    <Spacer as="span" hidden />
    <IconButton aria-label="Zoom out">
      <Sign />
    </IconButton>
    <ZoomSlider type="range" min="10" max="190" defaultValue="76" aria-label="Zoom" />
    <IconButton aria-label="Zoom in">
      <Sign plus />
    </IconButton>
    <ZoomValue>75%</ZoomValue>
  </StatusBar>
);

const TaskStrip = () => (
  <Taskbar>
    <TaskButton aria-label="Start">
      <StartIcon />
    </TaskButton>
    <TaskButton aria-label="Search">
      <SearchIcon />
    </TaskButton>
    <TaskButton aria-label="Task view">
      <TaskViewIcon />
    </TaskButton>
    <Apps>
      <AppButton aria-label="Internet Explorer">
        <ExplorerLogo />
      </AppButton>
      <AppButton $running aria-label="File Explorer">
        <FolderLogo />
      </AppButton>
      <AppButton $running aria-label="Chrome">
        <ChromeLogo />
      </AppButton>
      <AppButton $running aria-label="Excel">
        <OfficeLogo letter="X" color="#217346" size={29} kind="grid" />
      </AppButton>
      <AppButton $running aria-label="Outlook">
        <OfficeLogo letter="O" color="#0072c6" size={29} kind="mail" />
      </AppButton>
      <AppButton $running $active aria-label="Word">
        <OfficeLogo letter="W" color="#2b579a" size={27} kind="bars" />
      </AppButton>
    </Apps>
    <Spacer />
    <TrayButton aria-label="Windows Security">
      <ShieldIcon />
    </TrayButton>
    <TrayButton aria-label="Outlook">
      <OfficeLogo letter="O" color="#0072c6" size={21} kind="mail" />
    </TrayButton>
    <TrayButton aria-label="Sophos">
      <SophosIcon />
    </TrayButton>
    <TrayButton aria-label="Volume">
      <VolumeIcon />
    </TrayButton>
    <Clock>
      14:52
      <br />
      19/07/2022
    </Clock>
    <TrayButton $width={58} aria-label="Notifications">
      <NoticeIcon />
    </TrayButton>
    <ShowDesktop aria-label="Show desktop" />
  </Taskbar>
);

const App = () => (
  <Window>
    <GlobalStyle />
    <TopBar />
    <RibbonBar />
    <Body>
      <Navigation />
      <RulerColumn>
        <VerticalRuler />
      </RulerColumn>
      <Document />
      <Scrollbar>
        <BoxButton $height={19} aria-label="Scroll up">
          <Arrow dir="up" size={8} />
        </BoxButton>
        <ScrollTrack>
          <BoxButton $height={21} aria-label="Scroll position" />
        </ScrollTrack>
        <BoxButton $height={19} aria-label="Scroll down">
          <Arrow size={8} />
        </BoxButton>
      </Scrollbar>
    </Body>
    <Status />
    <TaskStrip />
  </Window>
);

export default App;
